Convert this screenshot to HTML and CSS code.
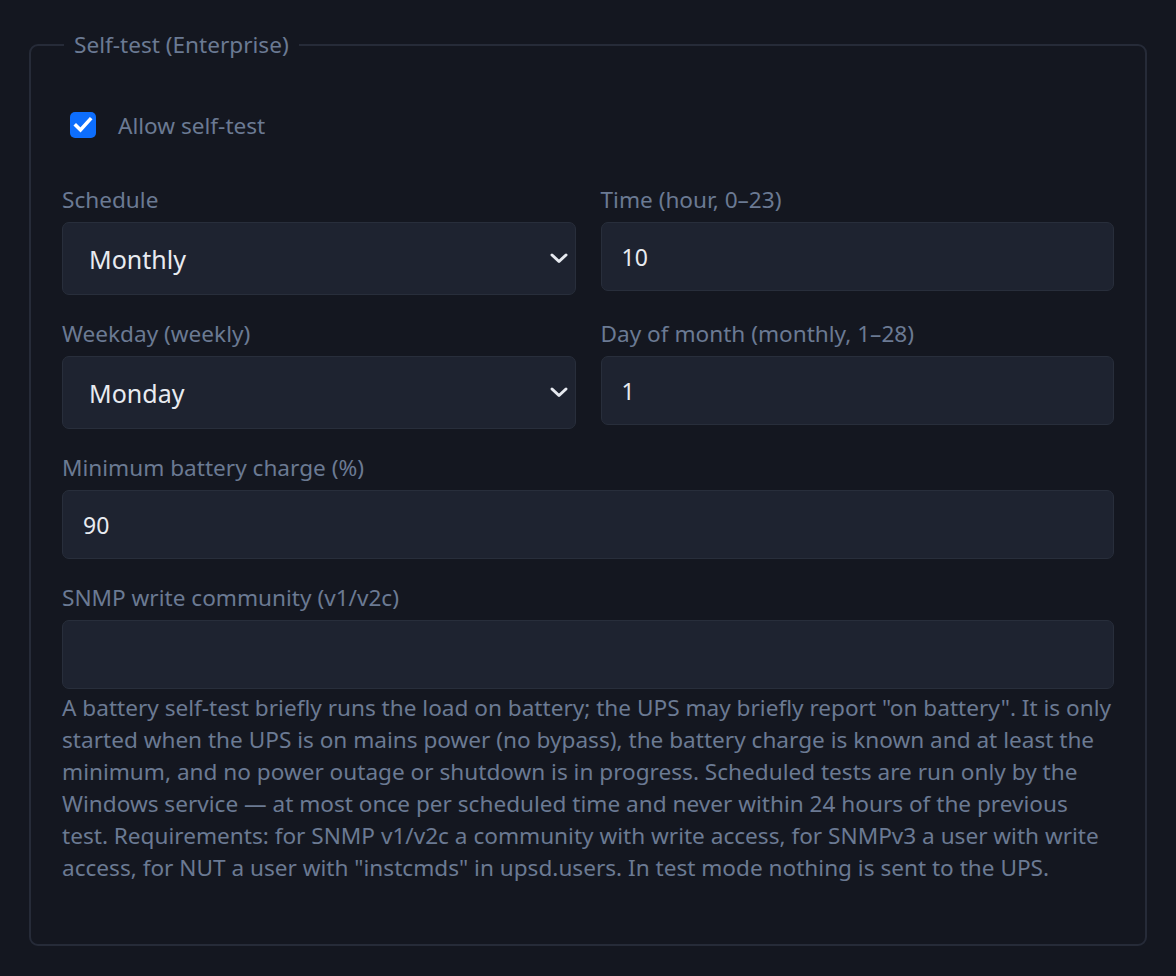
FILE: index.html
```html
<!DOCTYPE html>
<html lang="en">
<head>
    <meta charset="UTF-8">
    <meta name="viewport" content="width=device-width, initial-scale=1.0">
    <title>Self-test settings</title>
    <link rel="stylesheet" href="styles.css">
</head>
<body>
    <fieldset class="panel">
        <legend>Self-test (Enterprise)</legend>

        <label class="check-row">
            <span class="check-box">
                <svg viewBox="0 0 26 26" width="26" height="26"><path d="M6 13.5l4.5 4.5 9.5-10.5" fill="none" stroke="#fff" stroke-width="3.6" stroke-linecap="square" stroke-linejoin="miter"/></svg>
            </span>
            <span>Allow self-test</span>
        </label>

        <div class="form-grid">
            <div class="field">
                <label for="schedule">Schedule</label>
                <div class="select-wrap">
                    <select id="schedule">
                        <option>Daily</option>
                        <option>Weekly</option>
                        <option selected>Monthly</option>
                    </select>
                    <svg class="chevron" viewBox="0 0 20 20" width="20" height="20"><path d="M3 7l7 6.5 7-6.5" fill="none" stroke="#e6e9ef" stroke-width="3" stroke-linecap="round" stroke-linejoin="round"/></svg>
                </div>
            </div>
            <div class="field">
                <label for="hour">Time (hour, 0–23)</label>
                <input type="text" id="hour" value="10">
            </div>

            <div class="field">
                <label for="weekday">Weekday (weekly)</label>
                <div class="select-wrap">
                    <select id="weekday">
                        <option selected>Monday</option>
                        <option>Tuesday</option>
                        <option>Wednesday</option>
                    </select>
                    <svg class="chevron" viewBox="0 0 20 20" width="20" height="20"><path d="M3 7l7 6.5 7-6.5" fill="none" stroke="#e6e9ef" stroke-width="3" stroke-linecap="round" stroke-linejoin="round"/></svg>
                </div>
            </div>
            <div class="field">
                <label for="dom">Day of month (monthly, 1–28)</label>
                <input type="text" id="dom" value="1">
            </div>

            <div class="field wide">
                <label for="minCharge">Minimum battery charge (%)</label>
                <input type="text" id="minCharge" value="90">
            </div>

            <div class="field wide">
                <label for="community">SNMP write community (v1/v2c)</label>
                <input type="text" id="community" value="">
                <p class="help">A battery self-test briefly runs the load on battery; the UPS may briefly report "on battery". It is only started when the UPS is on mains power (no bypass), the battery charge is known and at least the minimum, and no power outage or shutdown is in progress. Scheduled tests are run only by the Windows service — at most once per scheduled time and never within 24 hours of the previous test. Requirements: for SNMP v1/v2c a community with write access, for SNMPv3 a user with write access, for NUT a user with "instcmds" in upsd.users. In test mode nothing is sent to the UPS.</p>
            </div>
        </div>
    </fieldset>
</body>
</html>
```

FILE: styles.css
```css
* {
    box-sizing: border-box;
}

body {
    margin: 0;
    padding: 29px 29px 28px 29px;
    background: #141720;
    font-family: 'Noto Sans', 'Open Sans', sans-serif;
    font-size: 22.6px;
    color: #6b7a93;
}

.panel {
    margin: 0;
    padding: 48px 31px 60px 31px;
    border: 2px solid #262b38;
    border-radius: 9px;
}

.panel legend {
    margin-left: 2px;
    padding: 0 10px;
    line-height: 32px;
    color: #6b7a93;
}

.check-row {
    display: flex;
    align-items: center;
    gap: 22px;
    height: 32px;
    padding-left: 8px;
    cursor: pointer;
}

.check-box {
    width: 26px;
    height: 26px;
    border-radius: 5px;
    background: #0d6efd;
    display: flex;
    align-items: center;
    justify-content: center;
}

.form-grid {
    display: grid;
    grid-template-columns: 1fr 1fr;
    column-gap: 25px;
    row-gap: 23px;
    margin-top: 43px;
}

.field.wide {
    grid-column: 1 / span 2;
}

.field label {
    display: block;
    line-height: 32px;
    margin-bottom: 6px;
}

input,
select {
    width: 100%;
    font-family: inherit;
    color: #e8ebf0;
    background: #1e2330;
    border: 1.5px solid #282e3b;
    border-radius: 7px;
    outline: none;
}

input {
    height: 69px;
    padding: 0 20px;
    font-size: 23px;
}

.select-wrap {
    position: relative;
}

select {
    appearance: none;
    height: 73px;
    padding: 0 50px 0 26px;
    font-size: 25px;
}

.chevron {
    position: absolute;
    right: 7px;
    top: 26px;
    pointer-events: none;
}

.help {
    margin: 3px 0 0 0;
    line-height: 32px;
}
```
